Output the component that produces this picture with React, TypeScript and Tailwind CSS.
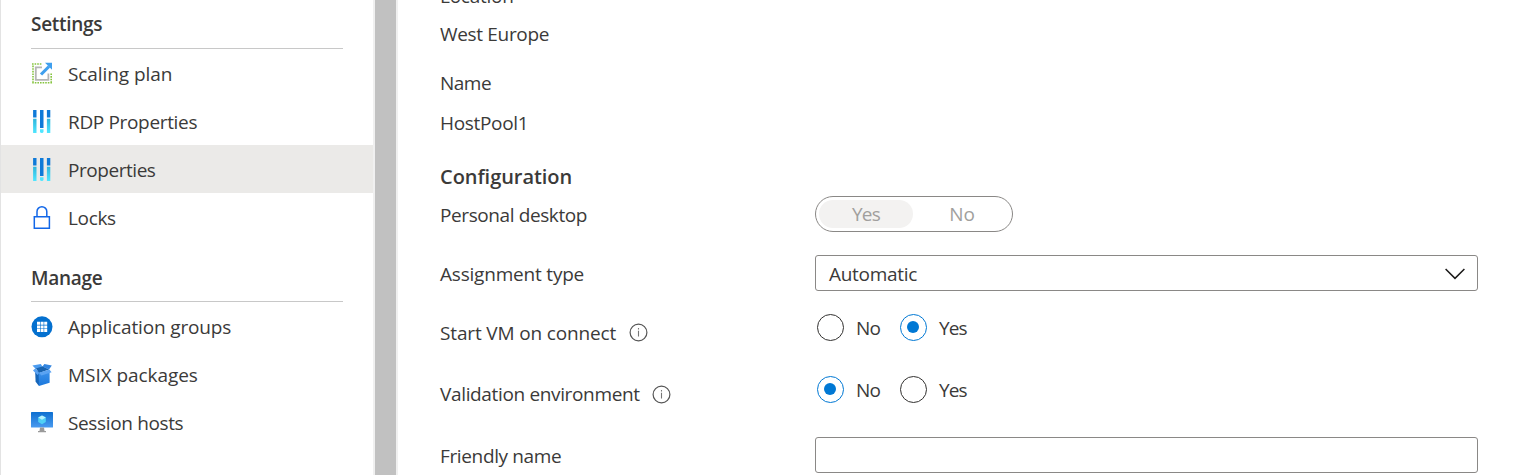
import type { ReactNode } from "react";

function ScalingIcon() {
  return (
    <svg width="22" height="22" viewBox="0 0 22 22" fill="none">
      <path d="M1 2H10.5" stroke="#86c440" strokeWidth="1.5" strokeDasharray="1.6 1" />
      <path d="M2 3.6V20M20.2 11.5V20" stroke="#86c440" strokeWidth="1.6" strokeDasharray="1.6 1" />
      <path d="M1.2 20.7H21" stroke="#86c440" strokeWidth="1.6" strokeDasharray="1.6 1" />
      <path d="M11 5.3H4.8V17.8H17.4V11.5" stroke="#b5b5b5" strokeWidth="1.8" />
      <path d="M10 12.5L18 4.5" stroke="#3f9fee" strokeWidth="3.1" />
      <path d="M14 .8H21V7.8Z" fill="#3f9fee" />
    </svg>
  );
}

function SlidersIcon() {
  return (
    <svg width="22" height="24" viewBox="0 0 22 24">
      <defs>
        <linearGradient id="sliderTrack" x1="0" y1="0" x2="0" y2="1">
          <stop offset="0" stopColor="#30b5dc" />
          <stop offset="1" stopColor="#50e6ff" />
        </linearGradient>
      </defs>
      <path d="M2.1 1h3.4v7.4H2.1zM9 1h3.5v18H9zM15.9 1h3.4v7.4h-3.4z" fill="#0f7ad8" />
      <path d="M2.1 9.8h3.4V24H2.1zM15.9 9.8h3.4V24h-3.4z" fill="url(#sliderTrack)" />
      <path d="M9 20.2h3.5v2.2q0 1.6-1.75 1.6T9 22.4z" fill="#50e6ff" />
    </svg>
  );
}

function LockIcon() {
  return (
    <svg width="22" height="26" viewBox="0 0 22 26" fill="none" stroke="#1267e8" strokeWidth="1.5">
      <path d="M3.3 12.7H18.4V24.2H3.3Z" />
      <path d="M6 12.5V7.6a4.9 4.9 0 0 1 9.8 0V12.5" />
    </svg>
  );
}

function GroupsIcon() {
  return (
    <svg width="22" height="24" viewBox="0 0 22 24">
      <circle cx="11" cy="12.8" r="10.5" fill="#0470cf" />
      <path
        d="M6 7.8h3v3H6zM9.6 7.8h3v3h-3zM13.2 7.8h3v3h-3zM6 11.4h3v3H6zM9.6 11.4h3v3h-3zM13.2 11.4h3v3h-3zM6 15h3v3H6zM9.6 15h3v3h-3zM13.2 15h3v3h-3z"
        fill="#fff"
      />
    </svg>
  );
}

function PackageIcon() {
  return (
    <svg width="22" height="26" viewBox="0 0 22 26">
      <defs>
        <linearGradient id="boxFront" x1="0" y1="0" x2="0" y2="1">
          <stop offset="0" stopColor="#3f94ec" />
          <stop offset="1" stopColor="#1b78dc" />
        </linearGradient>
      </defs>
      <path d="M4 7L8 11.5V25L4.6 20.8Z" fill="#1665b8" />
      <path d="M4.6 6.8L11 5L18.2 8.4L8 12Z" fill="#1863b0" />
      <path d="M7.6 12L18.6 9V21.8L8 25Z" fill="url(#boxFront)" />
      <path d="M1.4 4.4L9.8 3L11.4 5.4L4.4 7.4Z" fill="#4b9cf0" />
      <path d="M11.4 5.4L13.4 3L20.8 4.4L18 8.4Z" fill="#3385df" />
      <path d="M4.4 7.2L8 12L6.6 14L2 9.6Z" fill="#5ba3f3" />
      <path d="M8 12L18.4 8.6L20.6 11.2L10.4 14.6Z" fill="#5aa3f2" />
    </svg>
  );
}

function HostsIcon() {
  return (
    <svg width="22" height="22" viewBox="0 0 22 22">
      <defs>
        <linearGradient id="hostScreen" x1="0" y1="0" x2="0" y2="1">
          <stop offset="0" stopColor="#0c6fd0" />
          <stop offset="1" stopColor="#4b9bf0" />
        </linearGradient>
      </defs>
      <rect y="1" width="22" height="15.6" rx=".6" fill="url(#hostScreen)" />
      <path d="M11 4.4L14.8 6.5V11L11 13.2L7.2 11V6.5Z" fill="#50d0f5" />
      <path d="M11 4.4L14.8 6.5L11 8.7L7.2 6.5Z" fill="#b6f2fd" />
      <path d="M9 16.6H13L13.5 20H15V21.2H7V20H8.5Z" fill="#9a9a9a" />
    </svg>
  );
}

function InfoIcon() {
  return (
    <svg width="19" height="19" viewBox="0 0 19 19" fill="none" stroke="#555">
      <circle cx="9.5" cy="9.5" r="8.4" strokeWidth="1.2" />
      <path d="M9.5 7.8V13.5M9.5 5V6.4" stroke="#777" strokeWidth="1.1" />
    </svg>
  );
}

function NavItem({ icon, label, track, active = false }: { icon: ReactNode; label: string; track: string; active?: boolean }) {
  return (
    <li className={active ? "flex h-12 items-center bg-[#ebeae8] pl-[30px]" : "flex h-12 items-center pl-[30px]"}>
      <span className="flex w-[22px] justify-center">{icon}</span>
      <span className={`ml-[15px] pt-0.5 whitespace-nowrap ${track}`}>{label}</span>
    </li>
  );
}

function Radio({ label, checked = false }: { label: string; checked?: boolean }) {
  return (
    <label className="flex items-center">
      <span
        className={
          checked
            ? "flex size-[27px] items-center justify-center rounded-full border border-[#0078d4]"
            : "size-[27px] rounded-full border border-[#323130]"
        }
      >
        {checked && <span className="mr-px size-[12px] rounded-full bg-[#0078d4]" />}
      </span>
      <span className="ml-[12px] w-11 pt-px tracking-[-0.9px]">{label}</span>
    </label>
  );
}

function RadioPair({ value }: { value: "No" | "Yes" }) {
  return (
    <div className="-mt-px ml-0.5 flex h-7 items-center">
      <Radio label="No" checked={value === "No"} />
      <Radio label="Yes" checked={value === "Yes"} />
    </div>
  );
}

export default function App() {
  return (
    <div className="flex h-[475px] w-[1531px] overflow-hidden bg-white font-['Open_Sans','Noto_Sans',sans-serif] text-[19px] leading-7 text-[#3b3a39]">
      <nav className="w-[373px] border-l border-[#e3e3e3]">
        <h2 className="mx-[30px] flex h-[49px] items-center border-b border-[#c8c8c8] font-semibold tracking-[-0.3px]">
          Settings
        </h2>
        <ul>
          <NavItem icon={<ScalingIcon />} label="Scaling plan" track="tracking-[-0.08px]" />
          <NavItem icon={<SlidersIcon />} label="RDP Properties" track="tracking-[-0.34px]" />
          <NavItem icon={<SlidersIcon />} label="Properties" track="tracking-[-0.45px]" active />
          <NavItem icon={<LockIcon />} label="Locks" track="tracking-[-0.35px]" />
        </ul>
        <h2 className="mx-[30px] mt-[13px] flex h-12 items-center border-b border-[#c8c8c8] font-semibold tracking-[-0.3px]">
          Manage
        </h2>
        <ul>
          <NavItem icon={<GroupsIcon />} label="Application groups" track="tracking-[-0.15px]" />
          <NavItem icon={<PackageIcon />} label="MSIX packages" track="tracking-[-0.06px]" />
          <NavItem icon={<HostsIcon />} label="Session hosts" track="tracking-[-0.36px]" />
        </ul>
      </nav>

      <div className="w-[25px] border-x-2 border-[#f0f0f0] bg-[#c1c1c1]" />

      <main className="flex flex-1 flex-col pl-[42px]">
        <p className="-mt-[18px] tracking-[-0.25px]">Location</p>
        <p className="mt-2.5 tracking-[-0.33px]">West Europe</p>
        <p className="mt-[21px] tracking-[-0.5px]">Name</p>
        <p className="mt-3 tracking-[-0.33px]">HostPool1</p>
        <h2 className="mt-[26px] text-[20px] leading-7 font-semibold tracking-[-0.05px]">Configuration</h2>

        <div className="mt-[5px] flex h-9">
          <span className="w-[375px] pt-[5px] tracking-[-0.4px]">Personal desktop</span>
          <div className="flex h-9 w-[198px] rounded-full border border-[#8a8886] p-[3px] text-center text-[#a19f9d]">
            <span className="w-[95px] rounded-full bg-[#f3f2f1] leading-7 tracking-[-0.8px]">Yes</span>
            <span className="w-[97px] pl-0.5">No</span>
          </div>
        </div>

        <div className="mt-[23px] flex h-9">
          <span className="w-[375px] pt-[5px] tracking-[-0.2px]">Assignment type</span>
          <div className="flex h-9 w-[663px] items-center justify-between rounded-[3px] border border-[#8a8886] pr-3 pl-[13px]">
            <span className="pt-0.5 tracking-[-0.28px]">Automatic</span>
            <svg className="mt-0.5" width="20" height="12" viewBox="0 0 20 12" fill="none" stroke="#1b1a19" strokeWidth="1.5">
              <path d="M.6 1L10 10.4L19.4 1" />
            </svg>
          </div>
        </div>

        <div className="mt-[23px] flex h-9">
          <div className="flex w-[375px] pt-[5px]">
            <span className="tracking-[-0.15px]">Start VM on connect</span>
            <span className="mt-1 ml-[13px]"><InfoIcon /></span>
          </div>
          <RadioPair value="Yes" />
        </div>

        <div className="mt-[26px] flex h-9">
          <div className="flex w-[375px] pt-1">
            <span className="tracking-[-0.35px]">Validation environment</span>
            <span className="mt-[5px] ml-[12px]"><InfoIcon /></span>
          </div>
          <RadioPair value="No" />
        </div>

        <div className="mt-[25px] flex h-9">
          <span className="w-[375px] pt-[5px] tracking-[-0.36px]">Friendly name</span>
          <div className="h-9 w-[663px] rounded-[3px] border border-[#8a8886]" />
        </div>
      </main>
    </div>
  );
}
